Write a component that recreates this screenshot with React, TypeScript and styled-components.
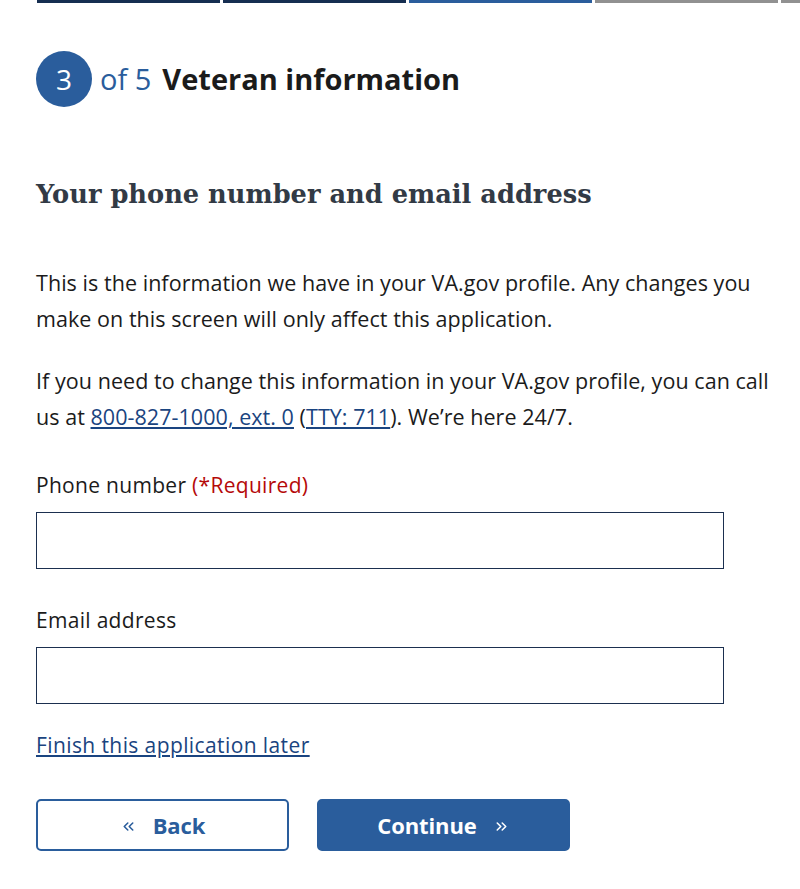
import React from "react";
import styled, { createGlobalStyle } from "styled-components";
import { ChevronsLeft, ChevronsRight } from "lucide-react";

const GlobalStyle = createGlobalStyle`
  html, body {
    margin: 0;
    padding: 0;
    background: #ffffff;
    overflow: hidden;
  }
  body {
    font-family: "Open Sans", Lato, sans-serif;
    color: #1b1b1b;
  }
`;

const blue = "#2a5d9c";

const Page = styled.div`
  width: 800px;
  height: 889px;
  overflow: hidden;
`;

const Progress = styled.div`
  display: flex;
  gap: 3px;
  padding-left: 37px;
  height: 3px;
`;

const Segment = styled.div<{ $state: "done" | "current" | "todo" }>`
  flex: 0 0 183px;
  height: 3px;
  background: ${(p) =>
    p.$state === "done" ? "#162e51" : p.$state === "current" ? blue : "#919191"};
`;

const Content = styled.div`
  padding: 0 14px 0 36px;
`;

const StepHeader = styled.h2`
  display: flex;
  align-items: center;
  margin: 48px 0 0;
  font-size: 29px;
  line-height: 56px;
  font-weight: 700;
`;

const StepCircle = styled.span`
  width: 56px;
  height: 56px;
  border-radius: 50%;
  background: ${blue};
  color: #fff;
  display: flex;
  align-items: center;
  justify-content: center;
  font-size: 28px;
  font-weight: 400;
`;

const StepOf = styled.span`
  color: ${blue};
  font-size: 29px;
  font-weight: 400;
  margin: 0 11px 0 8px;
`;

const Title = styled.h3`
  font-family: "DejaVu Serif", serif;
  font-weight: 700;
  font-size: 25.7px;
  line-height: 36px;
  color: #323a45;
  margin: 69px 0 0;
`;

const Para = styled.p`
  font-size: 21.5px;
  letter-spacing: 0.05px;
  line-height: 36px;
  margin: 53px 0 0;
  max-width: 750px;
  & + & {
    margin-top: 26px;
  }
`;

const Link = styled.a`
  color: #1a4480;
  text-decoration: underline;
  text-underline-offset: 2px;
`;

const Label = styled.label<{ $first?: boolean }>`
  display: block;
  font-size: 21px;
  letter-spacing: 0.3px;
  line-height: 30px;
  margin-top: ${(p) => (p.$first ? "35px" : "36px")};
`;

const Required = styled.span`
  color: #b50909;
`;

const Input = styled.input`
  display: block;
  box-sizing: border-box;
  width: 688px;
  height: 57px;
  margin-top: 12px;
  border: 1.5px solid #1b2f4f;
  border-radius: 0;
  font-size: 20px;
  padding: 8px;
`;

const LaterLink = styled(Link)`
  display: inline-block;
  font-size: 21px;
  letter-spacing: 0.4px;
  line-height: 30px;
  margin-top: 26px;
`;

const Buttons = styled.div`
  display: flex;
  gap: 28px;
  margin-top: 39px;
`;

const Button = styled.button<{ $primary?: boolean }>`
  box-sizing: border-box;
  width: 253px;
  height: 52px;
  border-radius: 5px;
  font-family: "Open Sans", sans-serif;
  font-size: 22px;
  font-weight: 700;
  letter-spacing: -0.1px;
  display: flex;
  align-items: center;
  justify-content: center;
  gap: 16px;
  border: 2px solid ${blue};
  background: ${(p) => (p.$primary ? blue : "#fff")};
  color: ${(p) => (p.$primary ? "#fff" : blue)};
  cursor: pointer;
  svg {
    flex: none;
    margin-top: 2px;
  }
`;

export default function App() {
  return (
    <Page>
      <GlobalStyle />
      <Progress>
        <Segment $state="done" />
        <Segment $state="done" />
        <Segment $state="current" />
        <Segment $state="todo" />
        <Segment $state="todo" />
      </Progress>
      <Content>
        <StepHeader>
          <StepCircle>3</StepCircle>
          <StepOf>of 5</StepOf>
          Veteran information
        </StepHeader>
        <Title>Your phone number and email address</Title>
        <Para>
          This is the information we have in your VA.gov profile. Any changes you make on this
          screen will only affect this application.
        </Para>
        <Para>
          If you need to change this information in your VA.gov profile, you can call us at{" "}
          <Link href="#">800-827-1000, ext. 0</Link> (<Link href="#">TTY: 711</Link>). We’re here
          24/7.
        </Para>
        <Label $first>
          Phone number <Required>(*Required)</Required>
        </Label>
        <Input type="tel" />
        <Label>Email address</Label>
        <Input type="email" />
        <LaterLink href="#">Finish this application later</LaterLink>
        <Buttons>
          <Button>
            <ChevronsLeft size={17} strokeWidth={2.2} />
            Back
          </Button>
          <Button $primary>
            Continue
            <ChevronsRight size={17} strokeWidth={2.2} />
          </Button>
        </Buttons>
      </Content>
    </Page>
  );
}
